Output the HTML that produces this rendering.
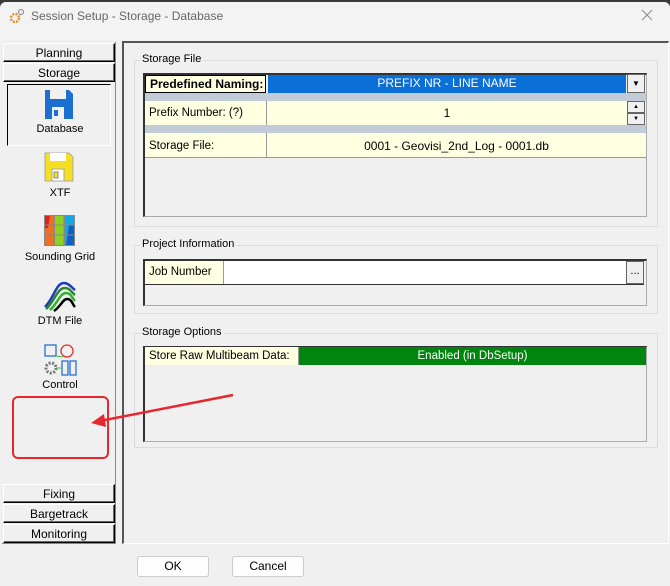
<!DOCTYPE html>
<html><head><style>
*{box-sizing:border-box;margin:0;padding:0}
body{width:670px;height:586px;background:#3a3a3a;font-family:"Liberation Sans",sans-serif;font-size:12px;color:#000;position:relative;overflow:hidden}
.a{position:absolute}
.win{left:0;top:2px;width:670px;height:584px;background:#f0f0f0;border-radius:6px 6px 0 0}
.title{left:0;top:2px;width:670px;height:38px;background:#f3f3f3;border-radius:6px 6px 0 0}
.tab{position:absolute;left:3px;width:112px;height:19px;border:1px solid #000;border-top-color:#fff;border-left-color:#fff;background:#f0f0f0;text-align:center;line-height:18px;font-size:12px;box-shadow:inset -1px -1px #666}
.lbl{position:absolute;font-size:11px;text-align:center;width:110px;left:5px}
.grp{position:absolute;border:1px solid #dcdcdc}
.gl{position:absolute;background:#f0f0f0;padding:0 2px;font-size:11px;top:-8px;left:5px}
.cell{position:absolute;background:#ffffe1;border-right:1px solid #999;font-size:11.5px;padding-left:4px}
.btn{position:absolute;width:72px;height:21px;background:#fdfdfd;border:1px solid #ccc;border-radius:3px;text-align:center;line-height:19px;font-size:12px}
</style></head><body>
<div class="a win"></div>
<div class="a title"></div>
<svg class="a" style="left:9px;top:8px" width="16" height="16"><circle cx="6" cy="10" r="4" fill="none" stroke="#e8902a" stroke-width="2.5" stroke-dasharray="2 1.2"/><circle cx="12" cy="4" r="2.5" fill="none" stroke="#999" stroke-width="1.3"/></svg>
<div class="a" style="left:31px;top:9px;font-size:12px;color:#666">Session Setup - Storage -  Database</div>
<svg class="a" style="left:641px;top:9px" width="12" height="12"><path d="M1 1L11 11M11 1L1 11" stroke="#888" stroke-width="1"/></svg>

<div class="a" style="left:2px;top:42px;width:114px;height:502px;border-right:1px solid #888;border-bottom:1px solid #888"></div>
<div class="tab" style="top:43px">Planning</div>
<div class="tab" style="top:63px">Storage</div>
<div class="a" style="left:7px;top:84px;width:104px;height:62px;border:1px solid #000;border-right-color:#fff;border-bottom-color:#fff;background:#f0f0f0"></div>
<svg class="a" style="left:44px;top:88px" width="30" height="32"><path d="M1 2h24l4 4v25H1z" fill="#1a6fd0"/><rect x="6" y="2" width="16" height="9" fill="#f0f0f0"/><rect x="8" y="19" width="12" height="12" fill="#f0f0f0"/><rect x="10" y="22" width="4" height="6" fill="#1a6fd0"/></svg>
<div class="lbl" style="top:123px">Database</div>
<svg class="a" style="left:44px;top:152px" width="30" height="30"><path d="M1 1h24l4 4v24H1z" fill="#f4e020" stroke="#aaa"/><rect x="6" y="1" width="16" height="8" fill="#fff"/><rect x="8" y="17" width="12" height="12" fill="#fff" stroke="#aaa"/><rect x="10" y="20" width="4" height="6" fill="#f4e020" stroke="#888"/></svg>
<div class="lbl" style="top:187px">XTF</div>
<svg class="a" style="left:44px;top:215px" width="31" height="31"><rect x="0" y="0" width="31" height="31" fill="#888"/><path d="M1 1h9v29H1z" fill="#f07020"/><path d="M1 1h5l-2 12H1z" fill="#e02020"/><path d="M11 1h9v29h-9z" fill="#90d020"/><path d="M21 1h9v29h-9z" fill="#10a8e8"/><path d="M25 10h5v20h-8z" fill="#1060c0"/><path d="M0 10h31M0 20h31M10 0v31M20 0v31" stroke="#888"/></svg>
<div class="lbl" style="top:251px">Sounding Grid</div>
<svg class="a" style="left:44px;top:280px" width="32" height="32"><path d="M1 27C10 18 12 3 20 3 25 3 28 8 31 10" fill="none" stroke="#1a3cc0" stroke-width="2.5"/><path d="M2 29C11 21 13 8 21 8 26 8 28 13 31 15" fill="none" stroke="#2a8a2a" stroke-width="2.5"/><path d="M6 30C14 23 16 13 22 13 27 13 28 18 31 21" fill="none" stroke="#30b030" stroke-width="2.5"/><path d="M10 31C17 26 19 19 23 19 28 19 28 24 31 27" fill="none" stroke="#000" stroke-width="2.5"/></svg>
<div class="lbl" style="top:315px">DTM File</div>
<svg class="a" style="left:43px;top:343px" width="34" height="34"><rect x="2" y="2" width="11" height="11" fill="none" stroke="#2a70d0" stroke-width="1.3"/><circle cx="24" cy="8" r="6" fill="none" stroke="#e03030" stroke-width="1.3"/><circle cx="8" cy="25" r="5" fill="none" stroke="#777" stroke-width="3" stroke-dasharray="2 1.5"/><rect x="19" y="18" width="6" height="14" fill="none" stroke="#2a70d0" stroke-width="1.3"/><rect x="27" y="18" width="6" height="14" fill="none" stroke="#2a70d0" stroke-width="1.3"/><path d="M13 13L20 14M13 25h6" stroke="#40c040"/></svg>
<div class="lbl" style="top:379px">Control</div>
<div class="tab" style="top:484px">Fixing</div>
<div class="tab" style="top:504px">Bargetrack</div>
<div class="tab" style="top:524px">Monitoring</div>

<div class="a" style="left:122px;top:41px;width:547px;height:503px;border-left:2px solid #555;border-top:2px solid #555;border-right:1px solid #fff;border-bottom:1px solid #fff"></div>

<div class="grp" style="left:134px;top:60px;width:524px;height:167px"><div class="gl">Storage File</div></div>
<div class="a" style="left:143px;top:73px;width:504px;height:144px;border:1px solid #aaa;border-left:2px solid #333;border-top:2px solid #333;background:#f0f0f0"></div>
<div class="cell" style="left:145px;top:75px;width:121px;height:18px;line-height:16px;font-weight:bold;font-size:12px;border:1px solid #000">Predefined Naming:</div>
<div class="a" style="left:268px;top:75px;width:358px;height:18px;background:#0a6fd6;color:#fff;text-align:center;line-height:17px;font-size:12px">PREFIX NR - LINE NAME</div>
<div class="a" style="left:627px;top:74px;width:18px;height:19px;background:#f0f0f0;border:1px solid #666;text-align:center;font-size:8px;line-height:18px">▼</div>
<div class="a" style="left:145px;top:93px;width:501px;height:8px;background:#c0ccd8"></div>
<div class="cell" style="left:145px;top:101px;width:122px;height:24px;line-height:24px">Prefix Number: (?)</div>
<div class="a" style="left:267px;top:101px;width:360px;height:24px;background:#ffffe1;text-align:center;line-height:24px">1</div>
<div class="a" style="left:627px;top:101px;width:18px;height:12px;border:1px solid #666;background:#f0f0f0;font-size:6px;text-align:center;line-height:10px">▲</div>
<div class="a" style="left:627px;top:113px;width:18px;height:12px;border:1px solid #666;background:#f0f0f0;font-size:6px;text-align:center;line-height:10px">▼</div>
<div class="a" style="left:145px;top:125px;width:501px;height:8px;background:#c0ccd8"></div>
<div class="cell" style="left:145px;top:133px;width:122px;height:25px;line-height:26px;border-bottom:1px solid #999">Storage File:</div>
<div class="a" style="left:267px;top:133px;width:379px;height:25px;background:#ffffe1;text-align:center;line-height:26px;border-bottom:1px solid #999">0001 - Geovisi_2nd_Log - 0001.db</div>

<div class="grp" style="left:134px;top:245px;width:524px;height:69px"><div class="gl">Project Information</div></div>
<div class="a" style="left:143px;top:259px;width:504px;height:47px;border:1px solid #aaa;border-left:2px solid #333;border-top:2px solid #333;background:#f0f0f0"></div>
<div class="a" style="left:145px;top:261px;width:499px;height:24px;background:#fff;border-bottom:1px solid #333"></div>
<div class="cell" style="left:145px;top:261px;width:79px;height:23px;line-height:22px">Job Number</div>
<div class="a" style="left:626px;top:261px;width:18px;height:23px;background:#f0f0f0;border:1px solid #666;text-align:center;line-height:18px;font-size:11px">...</div>

<div class="grp" style="left:134px;top:333px;width:524px;height:115px"><div class="gl">Storage Options</div></div>
<div class="a" style="left:143px;top:346px;width:504px;height:96px;border:1px solid #aaa;border-left:2px solid #333;border-top:2px solid #333;background:#f0f0f0"></div>
<div class="cell" style="left:145px;top:347px;width:154px;height:18px;line-height:18px">Store Raw Multibeam Data:</div>
<div class="a" style="left:299px;top:347px;width:347px;height:18px;background:#00850f;color:#fff;text-align:center;line-height:18px;font-size:11.5px">Enabled (in DbSetup)</div>

<div class="a" style="left:12px;top:396px;width:97px;height:63px;border:2.5px solid #e8262e;border-radius:6px"></div>
<svg class="a" style="left:0;top:0" width="670" height="586"><path d="M233 395L100 421" stroke="#e8262e" stroke-width="2.5"/><path d="M91 423L104 414 106 427z" fill="#e8262e"/></svg>

<div class="btn" style="left:137px;top:556px">OK</div>
<div class="btn" style="left:232px;top:556px">Cancel</div>
</body></html>
